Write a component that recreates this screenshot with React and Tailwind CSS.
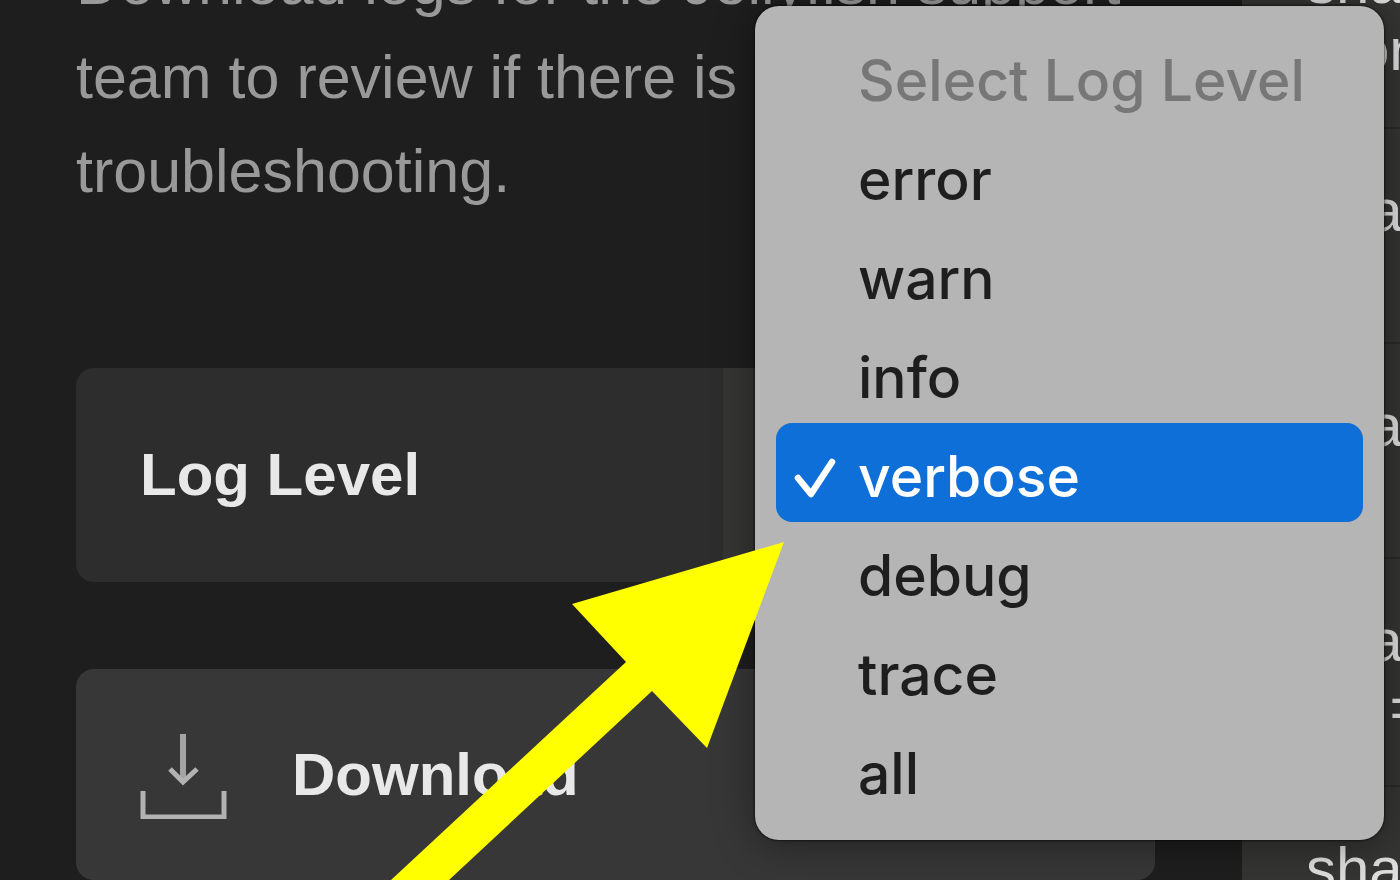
import React, { useState } from 'react';

const LEVELS = ['error', 'warn', 'info', 'verbose', 'debug', 'trace', 'all'];

const ENTRIES = [
  ['sha', 'Mon'],
  ['sha'],
  ['sha'],
  ['sha', 'up ='],
  ['sha'],
];

const CheckIcon = () => (
  <svg className="h-12 w-12" viewBox="0 0 48 48" fill="none" stroke="currentColor" strokeWidth="6.5" strokeLinecap="round" strokeLinejoin="round" aria-hidden="true">
    <path d="M6 25 L19 41 L40 9" />
  </svg>
);

const DownloadIcon = () => (
  <svg className="h-[88px] w-[88px] shrink-0" viewBox="0 0 88 88" fill="none" stroke="#b2b2b2" strokeWidth="5" aria-hidden="true">
    <path d="M43 3 V51" stroke="#a3a3a3" strokeWidth="6" />
    <path d="M30 38 L43 51 L57 38" />
    <path d="M3 60 V86 H84 V60" />
  </svg>
);

const LevelMenu = ({ value, onChange }) => (
  <div
    role="listbox"
    aria-label="Select Log Level"
    className="absolute top-1.5 right-4 z-10 w-[629px] rounded-[24px] bg-[#b5b5b5] p-[21px] font-[Inter,sans-serif] text-[57px] leading-[91px] font-medium text-[#1e1e1e] shadow-[0_4px_40px_rgba(0,0,0,0.4),0_0_2px_1px_rgba(0,0,0,0.5)]"
  >
    <p className="pt-2 pl-[82px] whitespace-nowrap text-[#777777]">Select Log Level</p>
    {LEVELS.map((level) => (
      <button
        key={level}
        type="button"
        role="option"
        aria-selected={level === value}
        onClick={() => onChange(level)}
        className="flex w-full items-center rounded-2xl pt-2 text-left aria-selected:bg-[#0f6fd9] aria-selected:text-white"
      >
        <span className="flex w-[82px] shrink-0 pl-4">{level === value && <CheckIcon />}</span>
        {level}
      </button>
    ))}
  </div>
);

const App = () => {
  const [level, setLevel] = useState('verbose');

  return (
    <div className="relative flex h-screen overflow-hidden border-b-2 border-white bg-[#1e1e1e] font-['Liberation_Sans',Arial,sans-serif] text-[60px]">
      {/* Logs panel */}
      <main className="min-w-0 flex-1 pr-[87px] pl-[76px]">
        <p className="-mt-16 text-[61px] leading-[94px] whitespace-nowrap text-[#999999]">
          Download logs for the Jellyfish support
          <br />
          team to review if there is a need for
          <br />
          troubleshooting.
        </p>

        <div className="mt-[150px] flex h-[214px] overflow-hidden rounded-[18px] bg-[#2d2d2d] font-bold text-[#e8e8e8]">
          <label htmlFor="log-level" className="flex w-3/5 items-center pl-16">
            Log Level
          </label>
          <select
            id="log-level"
            value={level}
            onChange={(e) => setLevel(e.target.value)}
            className="min-w-0 flex-1 appearance-none bg-[#353533] pl-16 font-normal"
          >
            {LEVELS.map((l) => (
              <option key={l}>{l}</option>
            ))}
          </select>
        </div>

        <button
          type="button"
          className="mt-[87px] flex h-[211px] w-full items-center gap-16 rounded-[18px] bg-[#373737] pl-16 font-bold text-[#e8e8e8]"
        >
          <DownloadIcon />
          Download
        </button>
      </main>

      {/* Log entries */}
      <aside className="w-[158px] shrink-0 overflow-hidden bg-[#353533] text-[#dedede]">
        <ul className="-mt-[99px]">
          {ENTRIES.map((lines, i) => (
            <li key={i} className="min-h-[215px] border-b-2 border-[#2a2a2a] pt-12 pb-11 pl-16 leading-[67px] whitespace-nowrap">
              {lines.map((line) => (
                <span key={line} className="block">{line}</span>
              ))}
            </li>
          ))}
        </ul>
      </aside>

      <LevelMenu value={level} onChange={setLevel} />

      {/* Pointer to the selected level */}
      <svg className="pointer-events-none absolute right-[616px] bottom-0 z-20 h-[338px] w-[393px]" viewBox="0 0 393 338" aria-hidden="true">
        <path d="M393 0 L181 62 L235 120 L0 338 H58 L261 149 L316 206 Z" fill="#ffff00" />
      </svg>
    </div>
  );
};

export default App;
